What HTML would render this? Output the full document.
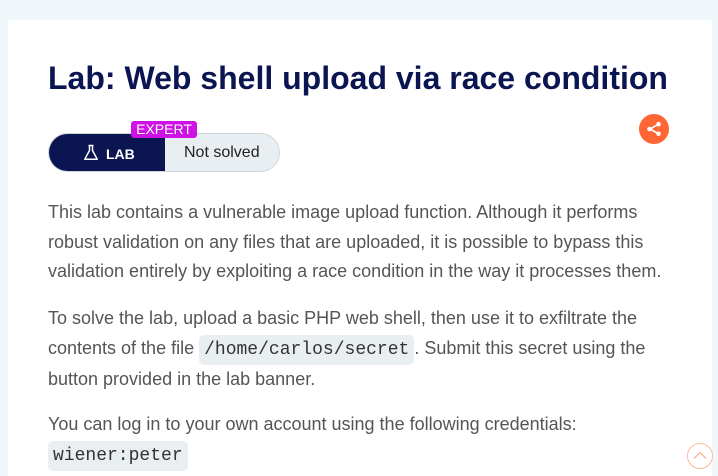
<!DOCTYPE html>
<html><head><meta charset="utf-8"><style>
html,body{margin:0;padding:0;}
body{width:718px;height:476px;background:#f0f7fa;font-family:"Liberation Sans",Arial,sans-serif;overflow:hidden;position:relative;}
.panel{position:absolute;left:8px;top:20px;width:704px;height:456px;background:#fff;}
h1{position:absolute;left:48px;top:60px;margin:0;font-size:32px;font-weight:bold;color:#0a1551;white-space:nowrap;}
.pill{position:absolute;left:48px;top:133px;width:230px;height:37px;border:1px solid #cfd6da;border-radius:20px;overflow:hidden;background:#e8eef1;}
.pill .l{position:absolute;left:0;top:0;width:116px;height:37px;background:#0a1551;color:#fff;font-weight:bold;font-size:14px;}
.pill .l span{position:absolute;left:57px;top:12px;}
.pill .r{position:absolute;left:135px;top:10px;font-size:16px;color:#222;}
.exp{position:absolute;left:131px;top:121px;width:66px;height:17px;background:#ce12e6;color:#fff;font-size:14px;line-height:17px;text-align:center;border-radius:3px;}
.share{position:absolute;left:639px;top:114px;width:30px;height:30px;border-radius:50%;background:#ff6633;}
p{position:absolute;left:48px;margin:0;width:630px;font-size:18px;line-height:29.6px;color:#555;}
code{font-family:"Liberation Mono",monospace;background:#e9eef1;color:#333;border-radius:5px;padding:5px 5px;font-size:18px;}
.up{position:absolute;left:687px;top:443px;width:24px;height:24px;border:1.5px solid #fdb99d;border-radius:50%;}
</style></head><body>
<div class="panel"></div>
<h1>Lab: Web shell upload via race condition</h1>
<div class="pill"><div class="l">
<svg style="position:absolute;left:34px;top:10px" width="16" height="17" viewBox="0 0 16 17"><path d="M5.5 1.5h5M6.5 1.5v5L1.8 15.2h12.4L9.5 6.5v-5" fill="none" stroke="#fff" stroke-width="1.5" stroke-linejoin="round"/></svg>
<span>LAB</span></div><div class="r">Not solved</div></div>
<div class="exp">EXPERT</div>
<div class="share"><svg width="30" height="30" viewBox="0 0 30 30"><g stroke="#fff" stroke-width="1.6" fill="none"><line x1="11" y1="15" x2="19" y2="10.5"/><line x1="11" y1="15" x2="19" y2="19.5"/></g><g fill="#fff"><circle cx="10.5" cy="15" r="2.3"/><circle cx="19.5" cy="10.2" r="2.3"/><circle cx="19.5" cy="19.8" r="2.3"/></g></svg></div>
<p style="top:198px">This lab contains a vulnerable image upload function. Although it performs robust validation on any files that are uploaded, it is possible to bypass this validation entirely by exploiting a race condition in the way it processes them.</p>
<p style="top:304px">To solve the lab, upload a basic PHP web shell, then use it to exfiltrate the contents of the file <code>/home/carlos/secret</code>. Submit this secret using the button provided in the lab banner.</p>
<p style="top:410px">You can log in to your own account using the following credentials: <code>wiener:peter</code></p>
<div class="up"><svg width="24" height="24" viewBox="0 0 24 24"><path d="M6 14.5L12 8.5L18 14.5" fill="none" stroke="#fdb99d" stroke-width="1.5"/></svg></div>
</body></html>
